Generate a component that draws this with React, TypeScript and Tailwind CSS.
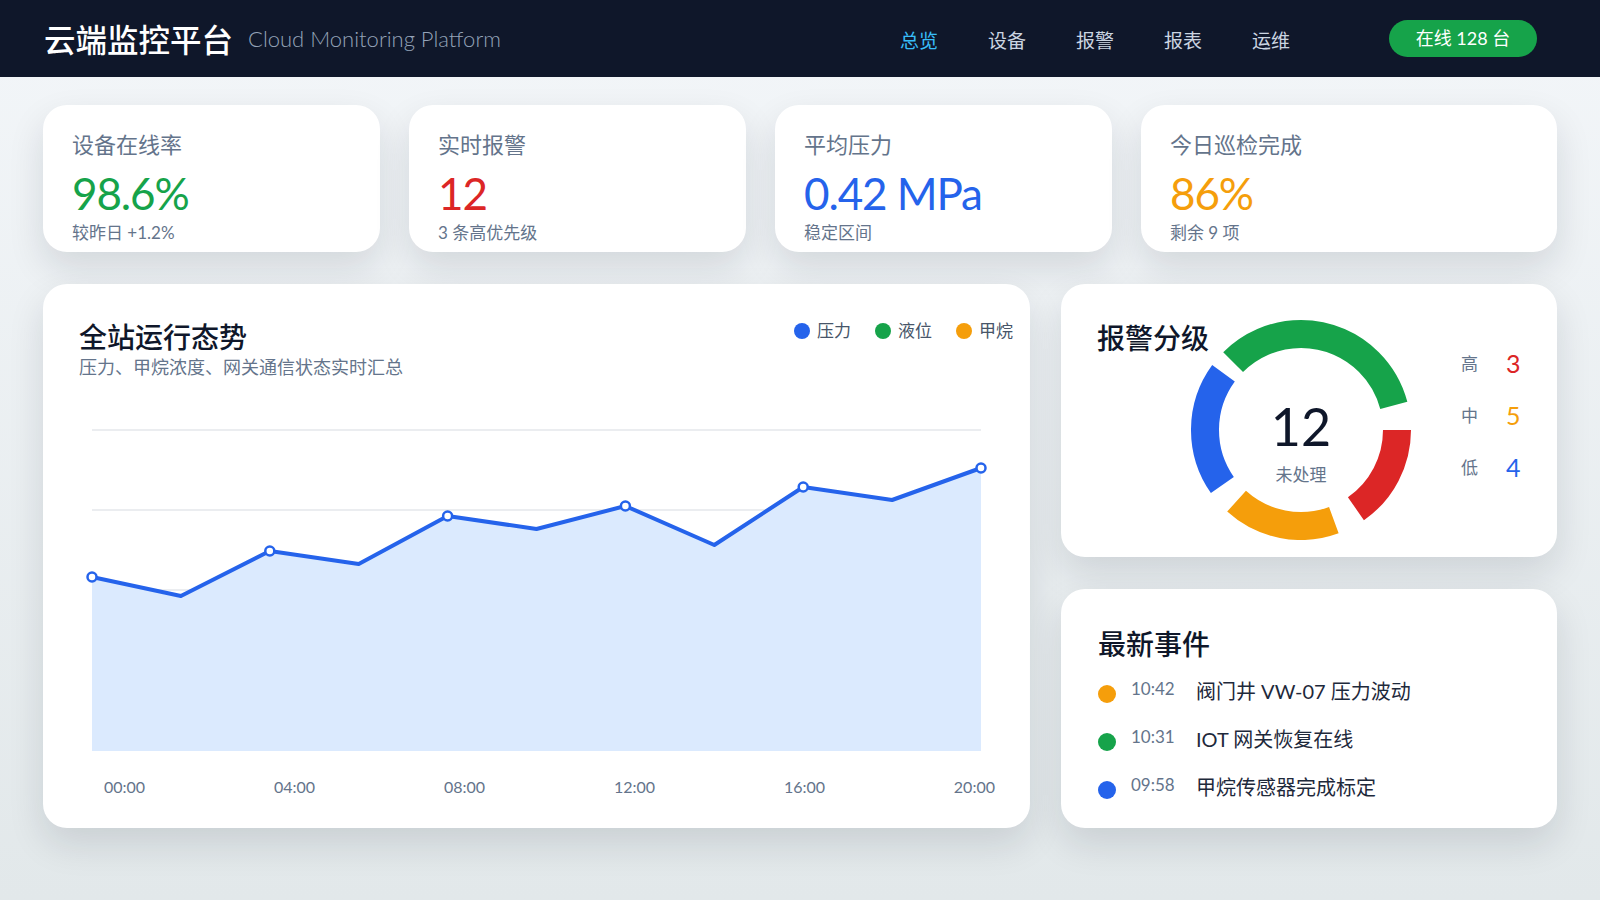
import React from 'react';

const stats = [
  { label: '设备在线率', value: '98.6%', note: '较昨日 +1.2%', color: 'text-[#16a34a]', width: 'w-[337px]' },
  { label: '实时报警', value: '12', note: '3 条高优先级', color: 'text-[#dc2626]', width: 'w-[337px]' },
  { label: '平均压力', value: '0.42 MPa', note: '稳定区间', color: 'text-[#2563eb]', width: 'w-[337px]' },
  { label: '今日巡检完成', value: '86%', note: '剩余 9 项', color: 'text-[#f59e0b]', width: 'flex-1' },
];

const navItems = ['总览', '设备', '报警', '报表', '运维'];

// pressure trend, one sample every two hours
const trend = [147, 166, 121, 134, 86, 99, 76, 115, 57, 70, 38];
const CHART_W = 889;
const CHART_H = 321;

const levels = [
  { name: '高', count: 3, color: 'text-[#dc2626]' },
  { name: '中', count: 5, color: 'text-[#f59e0b]' },
  { name: '低', count: 4, color: 'text-[#2563eb]' },
];

// ring segments, degrees clockwise from 12 o'clock
const segments = [
  { from: 315, to: 435, color: '#16a34a' },
  { from: 90, to: 145, color: '#dc2626' },
  { from: 160, to: 222, color: '#f59e0b' },
  { from: 235, to: 306, color: '#2563eb' },
];

const events = [
  { time: '10:42', text: '阀门井 VW-07 压力波动', dot: 'bg-[#f59e0b]' },
  { time: '10:31', text: 'IOT 网关恢复在线', dot: 'bg-[#16a34a]' },
  { time: '09:58', text: '甲烷传感器完成标定', dot: 'bg-[#2563eb]' },
];

const cardClass = 'bg-white rounded-[24px] shadow-[0_16px_36px_rgba(15,23,42,0.12)]';

function TrendChart() {
  const step = CHART_W / (trend.length - 1);
  const pts = trend.map((y, i) => [i * step, y] as const);
  const line = pts.map(([x, y]) => `${x},${y}`).join(' ');
  const area = `0,${CHART_H} ${line} ${CHART_W},${CHART_H}`;

  return (
    <svg width={CHART_W} height={CHART_H} className="overflow-visible block">
      {[0, 80, 160, 240].map((y) => (
        <line key={y} x1={0} x2={CHART_W} y1={y} y2={y} stroke="#e5e7eb" strokeWidth={1.5} />
      ))}
      <polygon points={area} fill="#dbeafe" />
      <polyline points={line} fill="none" stroke="#2563eb" strokeWidth={4} strokeLinejoin="round" />
      {pts
        .filter((_, i) => i % 2 === 0)
        .map(([x, y]) => (
          <circle key={x} cx={x} cy={y} r={4.5} fill="#fff" stroke="#2563eb" strokeWidth={2.5} />
        ))}
    </svg>
  );
}

function Donut() {
  const r = 96;
  const c = 2 * Math.PI * r;
  return (
    <div className="relative w-[220px] h-[220px] shrink-0">
      <svg width={220} height={220} className="block">
        {segments.map((s) => (
          <circle
            key={s.color}
            cx={110}
            cy={110}
            r={r}
            fill="none"
            stroke={s.color}
            strokeWidth={28}
            strokeDasharray={`${((s.to - s.from) / 360) * c} ${c}`}
            transform={`rotate(${s.from - 90} 110 110)`}
          />
        ))}
      </svg>
      <div className="absolute inset-0 flex flex-col items-center pt-[78px]">
        <div className="text-[52px] leading-[56px] text-[#0f172a]">12</div>
        <div className="text-[17px] leading-[22px] text-[#64748b] mt-[10px]">未处理</div>
      </div>
    </div>
  );
}

export default function App() {
  return (
    <div className="min-h-[900px] w-[1600px] bg-gradient-to-b from-[#f3f6f9] to-[#e2e8ea] font-['Lato','Noto_Sans_CJK_SC',sans-serif]">
      <header className="h-[77px] bg-[#0f172a] flex items-center justify-between pl-[44px] pr-[63px]">
        <div className="flex items-center gap-[15px]">
          <h1 className="text-[31.5px] leading-none font-medium text-white font-['Noto_Sans_CJK_SC',sans-serif]">云端监控平台</h1>
          <span className="text-[22px] font-light text-[#94a3b8]">Cloud Monitoring Platform</span>
        </div>
        <div className="flex items-center">
          <nav className="flex items-center gap-[50px] translate-y-[3px]">
            {navItems.map((item, i) => (
              <span key={item} className={`text-[19px] ${i === 0 ? 'text-[#38bdf8]' : 'text-[#cbd5e1]'}`}>
                {item}
              </span>
            ))}
          </nav>
          <span className="ml-[99px] h-[37px] w-[148px] rounded-full bg-[#16a34a] text-white text-[18px] flex items-center justify-center">
            在线 128 台
          </span>
        </div>
      </header>

      <main className="px-[43px] pt-[28px]">
        <section className="flex gap-[29px]">
          {stats.map((s) => (
            <div key={s.label} className={`${cardClass} ${s.width} h-[147px] px-[29px] pt-[26px]`}>
              <div className="text-[22px] leading-[28px] text-[#64748b]">{s.label}</div>
              <div className={`text-[44px] leading-[48px] mt-[10px] tracking-tight ${s.color}`}>{s.value}</div>
              <div className="text-[17px] leading-[22px] mt-[5px] text-[#64748b]">{s.note}</div>
            </div>
          ))}
        </section>

        <section className="flex gap-[31px] mt-[32px]">
          <div className={`${cardClass} w-[987px] h-[544px] pt-[36px]`}>
            <div className="flex items-start justify-between pl-[36px] pr-[17px]">
              <div>
                <h2 className="text-[28px] leading-[34px] font-medium text-[#0f172a]">全站运行态势</h2>
                <p className="text-[18px] leading-[22px] mt-[2px] text-[#64748b]">压力、甲烷浓度、网关通信状态实时汇总</p>
              </div>
              <div className="flex items-center gap-[24px] -mt-[2px]">
                {[
                  ['压力', 'bg-[#2563eb]'],
                  ['液位', 'bg-[#16a34a]'],
                  ['甲烷', 'bg-[#f59e0b]'],
                ].map(([name, dot]) => (
                  <div key={name} className="flex items-center gap-[7px]">
                    <span className={`w-[16px] h-[16px] rounded-full ${dot}`} />
                    <span className="text-[17px] text-[#475569]">{name}</span>
                  </div>
                ))}
              </div>
            </div>
            <div className="mt-[52px] ml-[49px]">
              <TrendChart />
            </div>
            <div className="flex justify-between mt-[26px] ml-[61px] mr-[35px] text-[16px] leading-[20px] text-[#64748b]">
              {['00:00', '04:00', '08:00', '12:00', '16:00', '20:00'].map((t) => (
                <span key={t}>{t}</span>
              ))}
            </div>
          </div>

          <div className="flex-1 flex flex-col gap-[32px]">
            <div className={`${cardClass} h-[273px] pt-[36px] pl-[36px] flex`}>
              <h2 className="w-[94px] whitespace-nowrap text-[28px] leading-[34px] font-medium text-[#0f172a] mt-[1px]">报警分级</h2>
              <Donut />
              <div className="ml-[50px] mt-[18px] flex flex-col">
                {levels.map((l) => (
                  <div key={l.name} className="h-[52px] flex items-center">
                    <span className="w-[45px] text-[17px] text-[#64748b]">{l.name}</span>
                    <span className={`text-[25px] ${l.color}`}>{l.count}</span>
                  </div>
                ))}
              </div>
            </div>

            <div className={`${cardClass} h-[239px] pt-[38px] pl-[37px]`}>
              <h2 className="text-[28px] leading-[34px] font-medium text-[#0f172a]">最新事件</h2>
              <ul className="mt-[6px]">
                {events.map((e) => (
                  <li key={e.time} className="h-[48px] flex items-center">
                    <span className={`w-[18px] h-[18px] rounded-full translate-y-[3px] ${e.dot}`} />
                    <span className="ml-[15px] w-[65px] text-[17px] text-[#64748b] -translate-y-[2px]">{e.time}</span>
                    <span className="text-[20px] text-[#1e293b]">{e.text}</span>
                  </li>
                ))}
              </ul>
            </div>
          </div>
        </section>
      </main>
    </div>
  );
}
